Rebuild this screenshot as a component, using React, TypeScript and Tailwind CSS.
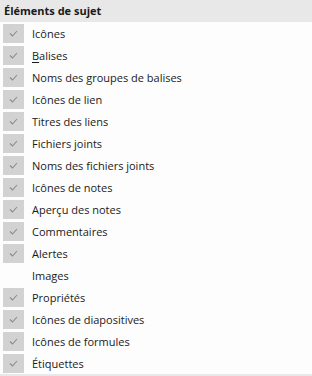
import React from "react";

const items: { label: React.ReactNode; checked: boolean }[] = [
  { label: "Icônes", checked: true },
  { label: <><span className="underline underline-offset-2">B</span>alises</>, checked: true },
  { label: "Noms des groupes de balises", checked: true },
  { label: "Icônes de lien", checked: true },
  { label: "Titres des liens", checked: true },
  { label: "Fichiers joints", checked: true },
  { label: "Noms des fichiers joints", checked: true },
  { label: "Icônes de notes", checked: true },
  { label: "Aperçu des notes", checked: true },
  { label: "Commentaires", checked: true },
  { label: "Alertes", checked: true },
  { label: "Images", checked: false },
  { label: "Propriétés", checked: true },
  { label: "Icônes de diapositives", checked: true },
  { label: "Icônes de formules", checked: true },
  { label: "Étiquettes", checked: true },
];

export default function App() {
  return (
    <div
      className="w-[312px] h-[376px] bg-[#fdfdfd] text-[11px] text-[#1a1a1a] overflow-hidden flex flex-col"
      style={{ fontFamily: '"Open Sans", "Noto Sans", sans-serif' }}
    >
      <div className="h-[22px] bg-[#e8e8e8] flex items-center px-[4px] font-bold text-[#1a1a1a]">
        Éléments de sujet
      </div>
      <div className="flex flex-col">
        {items.map((it, i) => (
          <div key={i} className="h-[22px] flex items-center">
            <div className="w-[32px] flex items-center pl-[3px]">
              {it.checked && (
                <div className="w-[21px] h-[19px] bg-[#d2d2d2] flex items-center justify-center">
                  <svg width="9" height="7" viewBox="0 0 9 7">
                    <path d="M1 3.5 L3.5 6 L8 1" fill="none" stroke="#8a8a8a" strokeWidth="1.1" />
                  </svg>
                </div>
              )}
            </div>
            <span className="leading-none pt-[1px] font-medium">{it.label}</span>
          </div>
        ))}
      </div>
      <div className="mt-auto h-[2px] bg-[#e8e8e8]" />
    </div>
  );
}
